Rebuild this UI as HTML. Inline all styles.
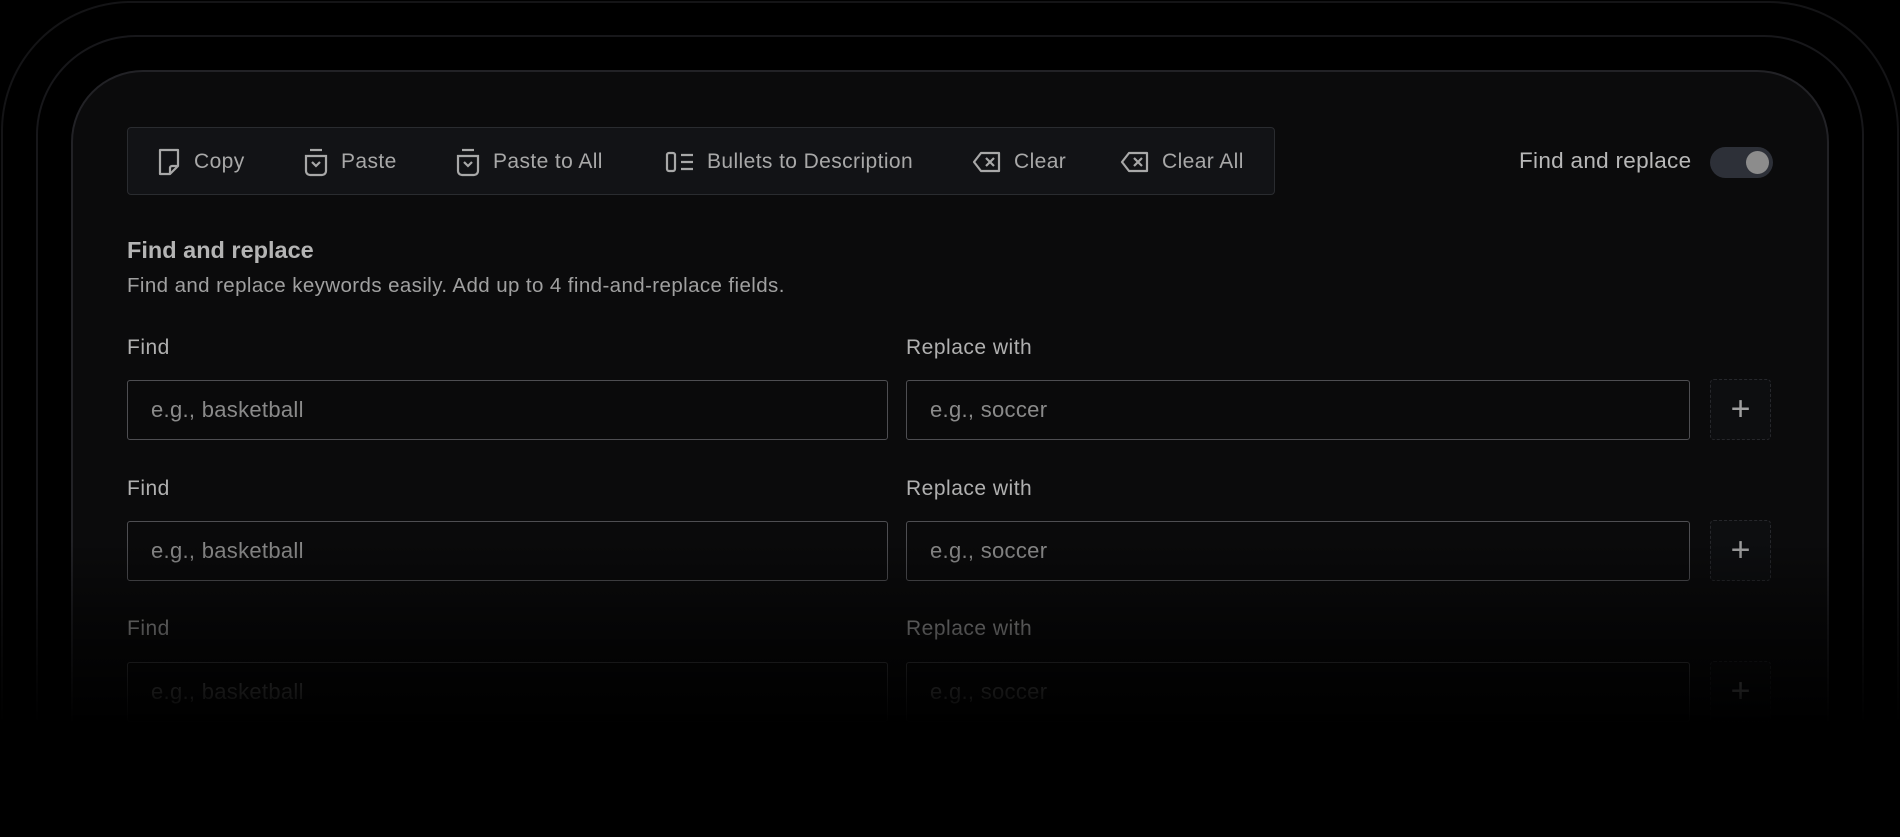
<!DOCTYPE html>
<html><head><meta charset="utf-8"><style>
*{box-sizing:border-box;margin:0;padding:0}
html,body{width:1900px;height:837px;overflow:hidden}
body{background:#000;position:relative;font-family:"Liberation Sans",sans-serif;color:#b0b0b0}
.ring{position:absolute;border:2px solid #141416;border-bottom:none}
.r1{left:1px;top:1px;width:1898px;height:836px;border-radius:130px 130px 0 0}
.r2{left:36px;top:35px;width:1828px;height:802px;border-radius:100px 100px 0 0;border-color:#17171a}
.panel{position:absolute;left:71px;top:70px;width:1758px;height:767px;border-radius:72px 72px 0 0;background:#0b0b0c;border:2px solid #222226;border-bottom:none}
.tb{position:absolute;left:127px;top:127px;width:1148px;height:68px;background:#121316;border:1.5px solid #2a2c30;border-radius:4px}
.it{position:absolute;top:0;height:68px;display:flex;align-items:center;font-size:21px;letter-spacing:0.4px;color:#a8a8a8}
.it svg{margin-right:12px}
.abs{position:absolute;white-space:nowrap}
.lbl{font-size:21px;letter-spacing:0.5px;color:#b0b0b0}
.in{position:absolute;height:60px;border:1.5px solid #4e4e52;border-radius:3px;background:#0a0a0b;font-size:22px;letter-spacing:0.3px;color:#8a8a8a;padding-left:23px;line-height:57px}
.plus{position:absolute;width:61px;height:61px;border:1.5px dashed #26272b;border-radius:4px;background:#0d0e10;color:#a0a0a0;font-size:34px;text-align:center;line-height:58px;font-weight:300}
.fade{position:absolute;left:0;top:540px;width:1900px;height:200px;background:linear-gradient(to bottom,rgba(0,0,0,0) 0%,rgba(0,0,0,.55) 45%,#000 92%)}
.blk{position:absolute;left:0;top:735px;width:1900px;height:102px;background:#000}
</style></head><body>
<div class="ring r1"></div><div class="ring r2"></div>
<div class="panel"></div>

<div class="tb">
 <div class="it" style="left:28px"><svg width="26" height="28" viewBox="0 0 26 28" fill="none" stroke="#a8a8a8" stroke-width="2.2" stroke-linejoin="round"><path d="M4 2h18v16l-8 8H4z"/><path d="M22 18h-6a2 2 0 0 0-2 2v6"/></svg>Copy</div>
 <div class="it" style="left:175px"><svg width="26" height="30" viewBox="0 0 26 30" fill="none" stroke="#a8a8a8" stroke-width="2.2"><path d="M7 3h12"/><path d="M3 9h20v15a4 4 0 0 1-4 4H7a4 4 0 0 1-4-4z"/><path d="M9 15l4 4 4-4"/></svg>Paste</div>
 <div class="it" style="left:327px"><svg width="26" height="30" viewBox="0 0 26 30" fill="none" stroke="#a8a8a8" stroke-width="2.2"><path d="M7 3h12"/><path d="M3 9h20v15a4 4 0 0 1-4 4H7a4 4 0 0 1-4-4z"/><path d="M9 15l4 4 4-4"/></svg>Paste to All</div>
 <div class="it" style="left:537px"><svg width="30" height="22" viewBox="0 0 30 22" fill="none" stroke="#a8a8a8" stroke-width="2.2"><rect x="2" y="2" width="8" height="18" rx="2"/><path d="M16 4h12M16 11h12M16 18h12"/></svg>Bullets to Description</div>
 <div class="it" style="left:844px"><svg width="30" height="22" viewBox="0 0 30 22" fill="none" stroke="#a8a8a8" stroke-width="2.2" stroke-linejoin="round"><path d="M9 2h18v18H9L2 11z"/><path d="M14 7l8 8M22 7l-8 8"/></svg>Clear</div>
 <div class="it" style="left:992px"><svg width="30" height="22" viewBox="0 0 30 22" fill="none" stroke="#a8a8a8" stroke-width="2.2" stroke-linejoin="round"><path d="M9 2h18v18H9L2 11z"/><path d="M14 7l8 8M22 7l-8 8"/></svg>Clear All</div>
</div>

<div class="abs" style="left:1519px;top:148px;font-size:22.5px;letter-spacing:0.3px;color:#b8b8b8">Find and replace</div>
<div class="abs" style="left:1710px;top:147px;width:63px;height:31px;border-radius:16px;background:#2d3038"></div>
<div class="abs" style="left:1746px;top:151px;width:23px;height:23px;border-radius:50%;background:#8c8c8c"></div>

<div class="abs" style="left:127px;top:237px;font-size:23.5px;font-weight:bold;color:#b4b4b4">Find and replace</div>
<div class="abs" style="left:127px;top:274px;font-size:20.5px;letter-spacing:0.4px;color:#a0a0a0">Find and replace keywords easily. Add up to 4 find-and-replace fields.</div>

<div class="abs lbl" style="left:127px;top:336px">Find</div>
<div class="abs lbl" style="left:906px;top:336px">Replace with</div>
<div class="in" style="left:127px;top:380px;width:761px">e.g., basketball</div>
<div class="in" style="left:906px;top:380px;width:784px">e.g., soccer</div>
<div class="plus" style="left:1710px;top:379px">+</div>

<div class="abs lbl" style="left:127px;top:477px">Find</div>
<div class="abs lbl" style="left:906px;top:477px">Replace with</div>
<div class="in" style="left:127px;top:521px;width:761px">e.g., basketball</div>
<div class="in" style="left:906px;top:521px;width:784px">e.g., soccer</div>
<div class="plus" style="left:1710px;top:520px">+</div>

<div class="abs lbl" style="left:127px;top:617px">Find</div>
<div class="abs lbl" style="left:906px;top:617px">Replace with</div>
<div class="in" style="left:127px;top:662px;width:761px">e.g., basketball</div>
<div class="in" style="left:906px;top:662px;width:784px">e.g., soccer</div>
<div class="plus" style="left:1710px;top:661px">+</div>

<div class="fade"></div>
<div class="blk"></div>
</body></html>
